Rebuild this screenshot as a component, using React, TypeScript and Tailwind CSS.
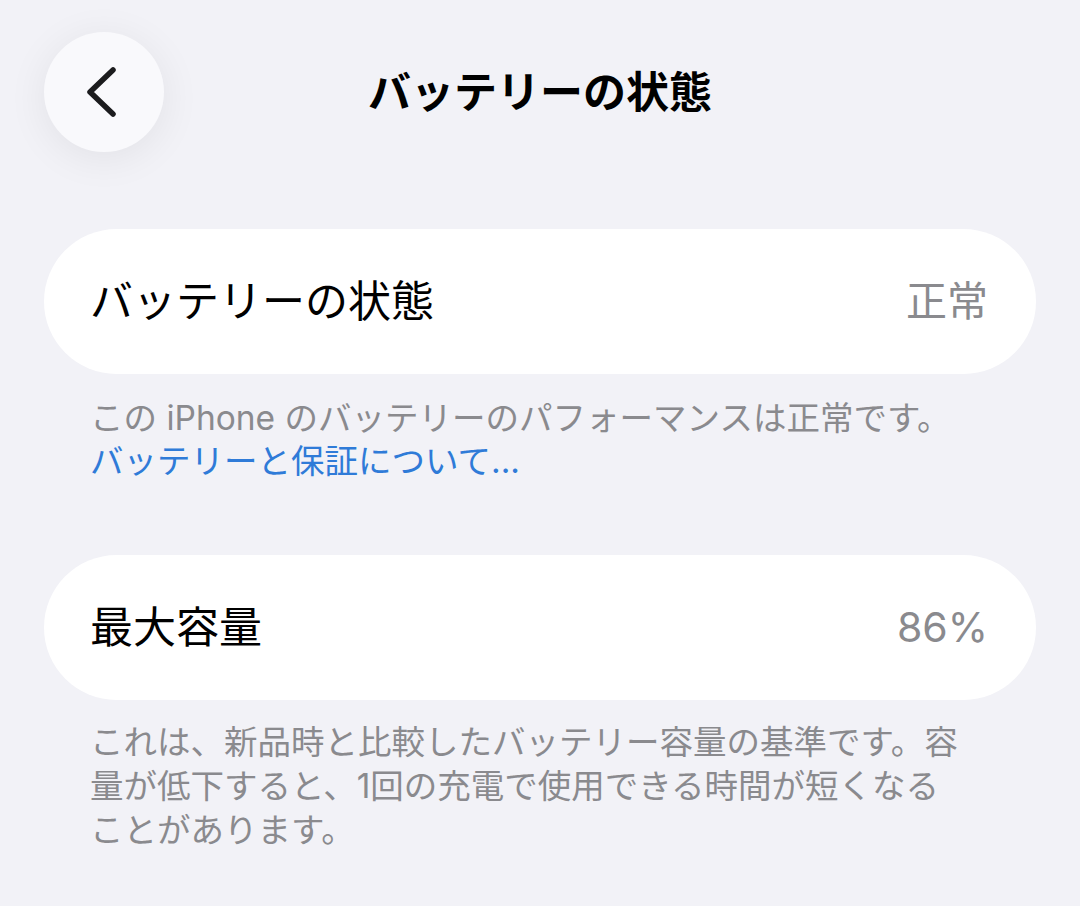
import React from "react";

const jp = { fontFamily: '"Inter", "Noto Sans CJK JP", sans-serif' };

function BackButton() {
  return (
    <button className="flex h-[120px] w-[120px] items-center justify-center rounded-full bg-[#f9f9fc] shadow-[0_6px_40px_rgba(0,0,0,0.07)]">
      <svg width="40" height="54" viewBox="0 0 40 54" fill="none">
        <path d="M29 5 L6 27 L29 49" stroke="#1c1c1e" strokeWidth="5.5" strokeLinecap="round" strokeLinejoin="round" />
      </svg>
    </button>
  );
}

function Row({ label, value }: { label: string; value: string }) {
  return (
    <div className="mx-[44px] flex h-[145px] items-center justify-between rounded-full bg-white pl-[46px] pr-[48px]">
      <span className="text-[43px] leading-none text-black">{label}</span>
      <span className="text-[41px] leading-none text-[#8a8a8e]">{value}</span>
    </div>
  );
}

export default function App() {
  return (
    <div className="h-[906px] w-[1080px] overflow-hidden bg-[#f2f2f7]" style={jp}>
      <div className="relative flex h-[184px] items-start px-[44px] pt-[32px]">
        <BackButton />
        <h1 className="absolute left-0 right-0 top-[68px] text-center text-[43px] font-bold leading-[48px] text-black">
          バッテリーの状態
        </h1>
      </div>

      <div className="mt-[45px]">
        <Row label="バッテリーの状態" value="正常" />
        <p className="mx-[90px] mt-[23px] text-[33.5px] leading-[43px] text-[#8a8a8e]">
          この iPhone のバッテリーのパフォーマンスは正常です。
          <br />
          <span className="text-[#2f7bd8]">バッテリーと保証について...</span>
        </p>
      </div>

      <div className="mt-[72px]">
        <Row label="最大容量" value="86%" />
        <p className="mx-[90px] mt-[20px] text-[33.5px] leading-[44px] text-[#8a8a8e]">
          これは、新品時と比較したバッテリー容量の基準です。容
          <br />
          量が低下すると、1回の充電で使用できる時間が短くなる
          <br />
          ことがあります。
        </p>
      </div>
    </div>
  );
}
